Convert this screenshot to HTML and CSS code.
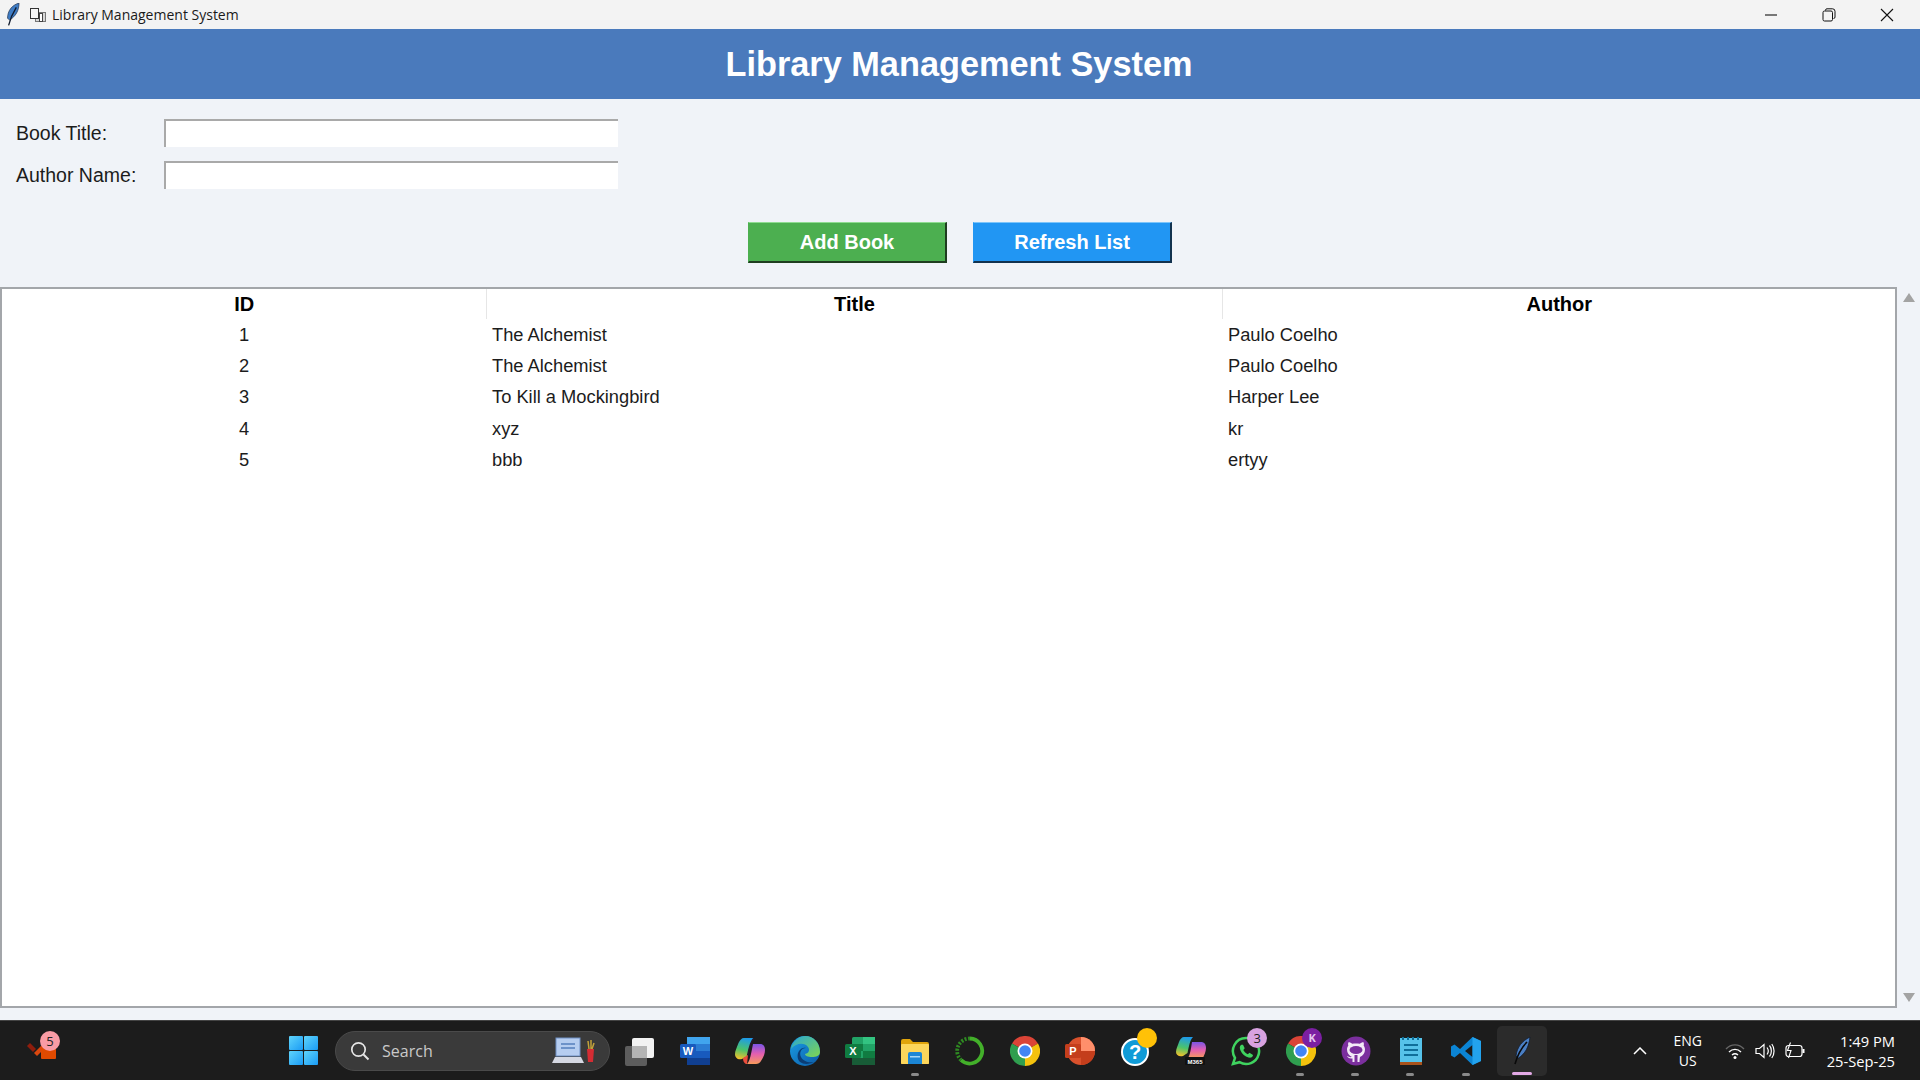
FILE: index.html
```html
<!DOCTYPE html>
<html lang="en">
<head>
    <meta charset="UTF-8">
    <title>Library Management System</title>
    <link rel="stylesheet" href="styles.css">
</head>
<body>
    <div class="window">
        <div class="titlebar">
            <svg class="feather-small" viewBox="0 0 12 21">
                <path d="M11.500 0C5 2 1 7 1 14L3 15.500C8.500 12 11.500 7 11.500 0Z" fill="#3f7cc4" stroke="#1b2c48" stroke-width="0.600"/>
                <path d="M9 4C6.500 8 4 12 2 20.500" fill="none" stroke="#101a2c" stroke-width="1.200"/>
            </svg>
            <svg class="doc-icon" viewBox="0 0 16 16">
                <rect x="5.500" y="5.500" width="10" height="9" fill="#d8d8d8" stroke="#777"/>
                <rect x="0.500" y="1.500" width="8" height="10" fill="#f6f6f6" stroke="#333"/>
                <rect x="9.500" y="6.500" width="3" height="8" fill="#fff" stroke="#444"/>
            </svg>
            <span class="window-title">Library Management System</span>
            <div class="window-buttons">
                <span class="win-btn"><svg viewBox="0 0 14 14"><path d="M1 7H13" stroke="#111" stroke-width="1.100"/></svg></span>
                <span class="win-btn"><svg viewBox="0 0 14 14"><path d="M3.500 2.500V2A1.500 1.500 0 0 1 5 .8H10.500A2.500 2.500 0 0 1 13 3.300V9A1.500 1.500 0 0 1 11.500 10.500" fill="none" stroke="#111"/><rect x="1" y="3" width="9.500" height="10" rx="1.500" fill="none" stroke="#111"/></svg></span>
                <span class="win-btn"><svg viewBox="0 0 14 14"><path d="M1 1L13 13M13 1L1 13" stroke="#111" stroke-width="1.100"/></svg></span>
            </div>
        </div>

        <h1 class="app-header">Library Management System</h1>

        <div class="book-form">
            <div class="form-row">
                <label for="book-title">Book Title:</label>
                <input type="text" id="book-title">
            </div>
            <div class="form-row">
                <label for="author-name">Author Name:</label>
                <input type="text" id="author-name">
            </div>
        </div>

        <div class="form-buttons">
            <button class="btn btn-add">Add Book</button>
            <button class="btn btn-refresh">Refresh List</button>
        </div>

        <div class="table-area">
            <div class="table-box">
                <table class="book-table">
                    <thead>
                        <tr>
                            <th class="col-id">ID</th>
                            <th class="col-title">Title</th>
                            <th class="col-author">Author</th>
                        </tr>
                    </thead>
                    <tbody>
                        <tr><td class="cell-id">1</td><td>The Alchemist</td><td>Paulo Coelho</td></tr>
                        <tr><td class="cell-id">2</td><td>The Alchemist</td><td>Paulo Coelho</td></tr>
                        <tr><td class="cell-id">3</td><td>To Kill a Mockingbird</td><td>Harper Lee</td></tr>
                        <tr><td class="cell-id">4</td><td>xyz</td><td>kr</td></tr>
                        <tr><td class="cell-id">5</td><td>bbb</td><td>ertyy</td></tr>
                    </tbody>
                </table>
            </div>
            <div class="scrollbar">
                <span class="arrow-up"></span>
                <span class="arrow-down"></span>
            </div>
        </div>
    </div>

    <div class="taskbar">
        <div class="task-left">
            <svg class="todo-icon" viewBox="0 0 36 30">
                <path d="M1 10L4 7L10 13L7 16Z" fill="#8f1d0c"/>
                <path d="M8 17L16 9L19 12L11 20Z" fill="#d9480f"/>
                <rect x="15" y="11" width="15" height="12" rx="1" fill="#e04a00"/>
            </svg>
            <span class="badge badge-pink">5</span>
        </div>

        <div class="task-center">
            <span class="slot">
                <svg viewBox="0 0 30 30">
                    <defs>
                        <linearGradient id="winBlue" x1="0" y1="0" x2="1" y2="1">
                            <stop offset="0" stop-color="#5fd4fb"/>
                            <stop offset="1" stop-color="#1a9bf5"/>
                        </linearGradient>
                    </defs>
                    <rect x="0" y="0" width="14" height="14" rx="1" fill="url(#winBlue)"/>
                    <rect x="15" y="0" width="14" height="14" rx="1" fill="url(#winBlue)"/>
                    <rect x="0" y="15" width="14" height="14" rx="1" fill="url(#winBlue)"/>
                    <rect x="15" y="15" width="14" height="14" rx="1" fill="url(#winBlue)"/>
                </svg>
            </span>

            <div class="search-box">
                <svg class="search-glass" viewBox="0 0 20 20"><circle cx="8.500" cy="8.500" r="6.700" fill="none" stroke="#e6e6e6" stroke-width="1.700"/><path d="M13.500 13.500L18.500 18.500" stroke="#e6e6e6" stroke-width="2"/></svg>
                <span class="search-text">Search</span>
                <svg class="search-art" viewBox="0 0 44 28">
                    <rect x="5" y="1" width="24" height="18" fill="#b6cdf0" stroke="#6f8fc4"/>
                    <path d="M10 7H24M10 11H24" stroke="#6d92c9" stroke-width="2"/>
                    <path d="M4 20H30L33 26H1Z" fill="#d5d8e2"/>
                    <path d="M36 12H43L42 25H37Z" fill="#d42c33"/>
                    <path d="M38 12L37 4M40 12V3M41 12L43 6" stroke="#c2a23a" stroke-width="1.500"/>
                </svg>
            </div>

            <span class="slot">
                <svg viewBox="0 0 30 30">
                    <rect x="0" y="10" width="22" height="20" rx="2" fill="#5d5d5d"/>
                    <rect x="7" y="2" width="22" height="20" rx="2" fill="#f2f2f2"/>
                    <rect x="7" y="10" width="15" height="12" fill="#b4b4b4"/>
                </svg>
            </span>

            <span class="slot">
                <svg viewBox="0 0 30 30">
                    <rect x="7" y="1" width="23" height="28" rx="1.500" fill="#2b7cd3"/>
                    <rect x="7" y="1" width="23" height="7" fill="#41a5ee"/>
                    <rect x="7" y="15" width="23" height="7" fill="#185abd"/>
                    <rect x="7" y="22" width="23" height="7" fill="#103f91"/>
                    <rect x="0" y="8" width="16" height="14" rx="1.500" fill="#185abd"/>
                    <text x="8" y="19" class="icon-letter">W</text>
                </svg>
            </span>

            <span class="slot">
                <svg viewBox="0 0 30 30">
                    <defs>
                        <linearGradient id="copA" x1="0.500" y1="0" x2="0.300" y2="1">
                            <stop offset="0" stop-color="#1e9be8"/>
                            <stop offset="0.550" stop-color="#4cc46a"/>
                            <stop offset="1" stop-color="#f5c02a"/>
                        </linearGradient>
                        <linearGradient id="copB" x1="0.500" y1="0" x2="0.500" y2="1">
                            <stop offset="0" stop-color="#7a55e6"/>
                            <stop offset="0.500" stop-color="#e45fb0"/>
                            <stop offset="1" stop-color="#f79a5b"/>
                        </linearGradient>
                    </defs>
                    <path d="M9 2H19C16 5 14 12 12.500 20L7 23C3 24 0 22 0 18C0 15 2 11 3.500 7C5 4 6.500 2 9 2Z" fill="url(#copA)"/>
                    <path d="M18 8H25C28 8 30 10 30 14C30 18 28 22 26 25C25 27 23 28 21 28H12C15 25 16 18 18 8Z" fill="url(#copB)"/>
                    <path d="M19 2C16 5 14 12 12.500 20" fill="none" stroke="#241a2e" stroke-width="1.500"/>
                    <path d="M8 22L13 19L12 28C10 28 8 26 8 22Z" fill="#ea4d3c"/>
                </svg>
            </span>

            <span class="slot">
                <svg viewBox="0 0 30 30">
                    <defs>
                        <linearGradient id="edgeBlue" x1="0" y1="0" x2="1" y2="1">
                            <stop offset="0" stop-color="#1aa0e8"/>
                            <stop offset="1" stop-color="#0c59a4"/>
                        </linearGradient>
                        <linearGradient id="edgeGreen" x1="0" y1="0" x2="1" y2="1">
                            <stop offset="0" stop-color="#28a7d6"/>
                            <stop offset="1" stop-color="#7fd650"/>
                        </linearGradient>
                    </defs>
                    <circle cx="15" cy="15" r="15" fill="url(#edgeBlue)"/>
                    <path d="M1 13C3 4 10 0 15 0C24 0 30 7 30 16C30 20 26 21 22 21C18 21 15 20 15 18C19 17 20 14 18 11C15 7 7 6 1 13Z" fill="url(#edgeGreen)"/>
                    <path d="M16 12C11 12 9 17 11 21C13 25 18 27 24 26C20 28 14 29 10 26C7 23 7 18 9 15C11 12 14 11 16 12Z" fill="#0b3d75"/>
                </svg>
            </span>

            <span class="slot">
                <svg viewBox="0 0 30 30">
                    <rect x="7" y="1" width="23" height="28" rx="1.500" fill="#21a366"/>
                    <rect x="18" y="1" width="12" height="7" fill="#33c481"/>
                    <rect x="7" y="8" width="11" height="7" fill="#107c41"/>
                    <rect x="18" y="15" width="12" height="7" fill="#107c41"/>
                    <rect x="7" y="22" width="23" height="7" fill="#185c37"/>
                    <rect x="0" y="8" width="16" height="14" rx="1.500" fill="#107c41"/>
                    <text x="8" y="19" class="icon-letter">X</text>
                </svg>
            </span>

            <span class="slot has-dot">
                <svg viewBox="0 0 30 30">
                    <path d="M1 5A2 2 0 0 1 3 3H10L13 6H27A2 2 0 0 1 29 8V27A1 1 0 0 1 28 28H2A1 1 0 0 1 1 27Z" fill="#e0a40b"/>
                    <rect x="1" y="8" width="28" height="20" rx="1" fill="#fcd65b"/>
                    <path d="M8 18A2 2 0 0 1 10 16H20A2 2 0 0 1 22 18V28H8Z" fill="#1b86d6"/>
                    <rect x="10" y="20" width="10" height="1.500" fill="#a3d6f7"/>
                </svg>
            </span>

            <span class="slot">
                <svg viewBox="0 0 30 30">
                    <path d="M15 2.500A12.500 12.500 0 1 1 6 24" fill="none" stroke="#43b02a" stroke-width="3.800"/>
                    <path d="M15 2.500A12.500 12.500 0 0 0 6 24" fill="none" stroke="#2f8a22" stroke-width="3.800" stroke-dasharray="2 1.500"/>
                </svg>
            </span>

            <span class="slot">
                <svg viewBox="0 0 30 30">
                    <path d="M15 15L2 7.500A15 15 0 0 1 28 7.500Z" fill="#db4437"/>
                    <path d="M15 15L28 7.500A15 15 0 0 1 15 30Z" fill="#f4c20d"/>
                    <path d="M15 15L15 30A15 15 0 0 1 2 7.500Z" fill="#2f9e4f"/>
                    <circle cx="15" cy="15" r="7.500" fill="#fff"/>
                    <circle cx="15" cy="15" r="5.800" fill="#4285f4"/>
                </svg>
            </span>

            <span class="slot">
                <svg viewBox="0 0 30 30">
                    <circle cx="16" cy="15" r="14" fill="#d9512c"/>
                    <path d="M16 1A14 14 0 0 1 30 15H16Z" fill="#ff8f6b"/>
                    <path d="M16 15H30A14 14 0 0 1 16 29Z" fill="#c43e1c"/>
                    <rect x="0" y="8" width="16" height="14" rx="1.500" fill="#c43e1c"/>
                    <text x="8" y="19" class="icon-letter">P</text>
                </svg>
            </span>

            <span class="slot">
                <svg viewBox="0 0 30 30">
                    <circle cx="15" cy="16" r="13" fill="#0f9bd7" stroke="#fff" stroke-width="2"/>
                    <text x="15" y="23" class="help-mark">?</text>
                </svg>
                <span class="badge badge-yellow"></span>
            </span>

            <span class="slot">
                <svg viewBox="0 0 30 30">
                    <path d="M8 1H17C14 4 13 10 11.500 17L7 20C3 21 0 19 0 16C0 13 2 9 3 6C4 3 6 1 8 1Z" fill="url(#copA)"/>
                    <path d="M16 6H25C28 6 30 8 30 12C30 16 28 19 27 22H12C14 19 15 13 16 6Z" fill="url(#copB)"/>
                    <rect x="9" y="21" width="20" height="8" rx="1" fill="#111"/>
                    <text x="19" y="28" class="m365">M365</text>
                </svg>
            </span>

            <span class="slot">
                <svg viewBox="0 0 30 30">
                    <path d="M15 2A13 13 0 0 0 4 22L2 28L8.500 26.200A13 13 0 1 0 15 2Z" fill="none" stroke="#3fd35f" stroke-width="2.500"/>
                    <path d="M10 9C8.500 10 8.500 12 9.500 14.500C11 18 14 20.500 17.500 21.500C20 22 22 21 22 19L18.500 16.800L16.800 18.300C15 17.500 13.200 15.800 12.300 14L13.700 12.300L12 8.800C11.300 8.500 10.500 8.600 10 9Z" fill="#3fd35f"/>
                </svg>
                <span class="badge badge-lilac">3</span>
            </span>

            <span class="slot has-dot">
                <svg viewBox="0 0 30 30">
                    <path d="M15 15L2 7.500A15 15 0 0 1 28 7.500Z" fill="#db4437"/>
                    <path d="M15 15L28 7.500A15 15 0 0 1 15 30Z" fill="#f4c20d"/>
                    <path d="M15 15L15 30A15 15 0 0 1 2 7.500Z" fill="#2f9e4f"/>
                    <circle cx="15" cy="15" r="7.500" fill="#fff"/>
                    <circle cx="15" cy="15" r="5.800" fill="#4285f4"/>
                </svg>
                <span class="badge badge-purple">K</span>
            </span>

            <span class="slot has-dot">
                <svg viewBox="0 0 30 30">
                    <circle cx="15" cy="15" r="14.500" fill="#7b2f9e"/>
                    <path d="M11.500 26V22.500C8 23 7 21.500 6 20C7.500 20.500 8.500 21.500 11 21C8 19.500 6 17 6 13.500C6 12 6.500 10.800 7.300 9.800C7 8.600 7 7.300 7.500 6.300C9 6.300 10.300 7 11.300 7.800C13.500 7.300 16.500 7.300 18.700 7.800C19.700 7 21 6.300 22.500 6.300C23 7.300 23 8.600 22.700 9.800C23.500 10.800 24 12 24 13.500C24 17 22 19.500 19 21C18.800 22 18.500 24 18.500 26H16.500V19H13.500V26Z" fill="#f3eaf7"/>
                    <ellipse cx="15" cy="14" rx="6.500" ry="4" fill="#7b2f9e"/>
                </svg>
            </span>

            <span class="slot has-dot">
                <svg viewBox="0 0 30 30">
                    <rect x="4" y="2" width="22" height="27" fill="#56c3ea"/>
                    <rect x="4" y="26" width="22" height="3" fill="#a9531c"/>
                    <path d="M8 9H22M8 14H22M8 19H22" stroke="#0f6f9a" stroke-width="2"/>
                    <path d="M7 1V4M12 1V4M17 1V4M22 1V4" stroke="#0f6f9a" stroke-width="2"/>
                </svg>
            </span>

            <span class="slot has-dot">
                <svg viewBox="0 0 30 30">
                    <path d="M21.500 1L30 5V25L21.500 29L9 17L3.500 21.500L0 19.500V10.500L3.500 8.500L9 13ZM21.500 9L14 15L21.500 21Z" fill="#0b84d4"/>
                    <path d="M21.500 1L30 5V25L21.500 29Z" fill="#23a3ee"/>
                </svg>
            </span>

            <span class="slot slot-active">
                <svg viewBox="0 0 30 30">
                    <path d="M23 1C15 5 10 11 9 20L11.500 22C18 18 22 11 23 1Z" fill="#4a7fc4" stroke="#101a2c" stroke-width="0.800"/>
                    <path d="M20 6C15 11 11 17 8 28" fill="none" stroke="#0a0a0a" stroke-width="1.600"/>
                </svg>
            </span>
        </div>

        <div class="tray">
            <svg class="tray-caret" viewBox="0 0 14 8"><path d="M1 7L7 1L13 7" fill="none" stroke="#fff" stroke-width="1.500"/></svg>
            <div class="lang">ENG<br>US</div>
            <svg class="tray-icon" viewBox="0 0 20 20"><path d="M1 8C6 2.500 14 2.500 19 8" fill="none" stroke="#666" stroke-width="1.400"/><path d="M4 11C7.500 7.500 12.500 7.500 16 11M7 14C9 12.300 11 12.300 13 14" fill="none" stroke="#fff" stroke-width="1.400"/><circle cx="10" cy="16.500" r="1.500" fill="#fff"/></svg>
            <svg class="tray-icon" viewBox="0 0 20 20"><path d="M1 7.500H4.500L9 3.500V16.500L4.500 12.500H1Z" fill="none" stroke="#fff" stroke-width="1.200"/><path d="M12 6.500C13.500 8.500 13.500 11.500 12 13.500M14.500 4.500C17 7.500 17 12.500 14.500 15.500M16.800 3C19.800 7 19.800 13 16.800 17" fill="none" stroke="#fff" stroke-width="1.200"/></svg>
            <svg class="tray-icon" viewBox="0 0 20 20"><rect x="1" y="4.500" width="16" height="11" rx="2.500" fill="none" stroke="#fff" stroke-width="1.200"/><rect x="17.500" y="8" width="2" height="4" fill="#fff"/><path d="M5.500 1.500L2.500 9.500H6L3.500 17" fill="#1c1c1c" stroke="#fff" stroke-width="1.100"/></svg>
            <div class="clock">
                <div>1:49 PM</div>
                <div>25-Sep-25</div>
            </div>
        </div>
    </div>
</body>
</html>
```

FILE: styles.css
```css
* {
    margin: 0;
    padding: 0;
    box-sizing: border-box;
}

body {
    width: 1920px;
    height: 1080px;
    overflow: hidden;
    font-family: "Liberation Sans", Arial, sans-serif;
    background-color: #f0f3f8;
    display: flex;
    flex-direction: column;
}

.window {
    height: 1020px;
    display: flex;
    flex-direction: column;
}

/* title bar */
.titlebar {
    height: 29px;
    background-color: #f3f3f3;
    display: flex;
    align-items: center;
    padding: 0 4px 0 6px;
}

.feather-small {
    width: 14px;
    height: 23px;
}

.doc-icon {
    width: 16px;
    height: 16px;
    margin-left: 10px;
}

.window-title {
    margin-left: 6px;
    font-family: "Open Sans", sans-serif;
    font-size: 14px;
    color: #1a1a1a;
}

.window-buttons {
    margin-left: auto;
    display: flex;
}

.win-btn {
    width: 58px;
    height: 29px;
    display: flex;
    align-items: center;
    justify-content: center;
}

.win-btn svg {
    width: 14px;
    height: 14px;
}

/* header */
.app-header {
    height: 70px;
    background-color: #4a7abc;
    color: white;
    font-size: 34.300px;
    line-height: 70px;
    text-align: center;
    padding-right: 2px;
}

/* form */
.book-form {
    padding: 20px 0 0 16px;
    display: flex;
    flex-direction: column;
    gap: 14px;
}

.form-row {
    display: flex;
    align-items: center;
    height: 28px;
}

.form-row label {
    width: 148px;
    font-size: 19.500px;
    color: #1c1c1c;
}

.form-row input {
    width: 454px;
    height: 28px;
    background-color: white;
    border: none;
    border-top: 2px solid #a9a9a9;
    border-left: 2px solid #a9a9a9;
}

.form-buttons {
    display: flex;
    justify-content: center;
    gap: 26px;
    padding-top: 33px;
}

.btn {
    width: 199px;
    height: 41px;
    color: white;
    font-family: "Liberation Sans", Arial, sans-serif;
    font-size: 20px;
    font-weight: bold;
    border-style: solid;
    border-width: 1px 2px 2px 1px;
}

.btn-add {
    background-color: #4caf50;
    border-color: #8fdc92 #1f3d20 #1f3d20 #4caf50;
}

.btn-refresh {
    background-color: #2196f3;
    border-color: #7cc5fb #12324f #12324f #2196f3;
}

/* table */
.table-area {
    flex: 1;
    display: flex;
    margin-top: 24px;
    padding-bottom: 12px;
}

.table-box {
    width: 1897px;
    background-color: white;
    border: 2px solid #a3a6aa;
}

.book-table {
    width: 100%;
    border-collapse: collapse;
    table-layout: fixed;
    font-size: 18.300px;
    color: #1c1c1c;
}

.book-table th {
    height: 30px;
    padding-left: 1px;
    font-size: 20px;
    color: #000;
    border-right: 1px solid #e6e6e6;
}

.book-table th:last-child {
    border-right: none;
}

.col-id {
    width: 484px;
}

.col-title {
    width: 736px;
}

.book-table td {
    height: 31.300px;
    padding-left: 6px;
}

.book-table td.cell-id {
    text-align: center;
    padding-left: 0;
}

.scrollbar {
    flex: 1;
    display: flex;
    flex-direction: column;
    justify-content: space-between;
    align-items: center;
    padding: 6px 0;
}

.arrow-up {
    border-left: 6px solid transparent;
    border-right: 6px solid transparent;
    border-bottom: 9px solid #a3a3a3;
}

.arrow-down {
    border-left: 6px solid transparent;
    border-right: 6px solid transparent;
    border-top: 9px solid #a3a3a3;
}

/* taskbar */
.taskbar {
    height: 60px;
    background-color: #1c1c1c;
    border-top: 1px solid #444;
    display: flex;
    align-items: center;
    position: relative;
}

.task-left {
    width: 276px;
    padding-left: 26px;
    position: relative;
}

.todo-icon {
    width: 36px;
    height: 30px;
    display: block;
}

.task-center {
    display: flex;
    align-items: center;
}

.slot {
    width: 55.100px;
    height: 50px;
    display: flex;
    align-items: center;
    justify-content: center;
    position: relative;
}

.slot svg {
    width: 30px;
    height: 30px;
}

.has-dot::after {
    content: "";
    position: absolute;
    left: 23px;
    bottom: 0;
    width: 8px;
    height: 3px;
    border-radius: 2px;
    background-color: #8a8a8a;
}

.slot-active {
    background-color: #2b2b2b;
    border-radius: 5px;
    width: 50px;
    margin-left: 3px;
}

.slot-active::after {
    content: "";
    position: absolute;
    left: 15px;
    bottom: 1px;
    width: 20px;
    height: 3px;
    border-radius: 2px;
    background-color: #e3a9e6;
}

.badge {
    position: absolute;
    width: 20px;
    height: 20px;
    border-radius: 50%;
    font-family: "Open Sans", sans-serif;
    font-size: 13px;
    line-height: 20px;
    text-align: center;
    color: #222;
}

.task-left .badge {
    left: 40px;
    top: -5px;
}

.slot .badge {
    left: 29px;
    top: 2px;
}

.badge-pink {
    background-color: #f99ca5;
}

.badge-yellow {
    background-color: #ffc107;
}

.badge-lilac {
    background-color: #d8a2e0;
}

.badge-purple {
    background-color: #7b1fa2;
    color: #e3c5ee;
    font-size: 11px;
    font-weight: bold;
}

.search-box {
    width: 275px;
    height: 40px;
    margin: 0 2px 0 4px;
    background-color: #3a3a3a;
    border: 1px solid #4a4a4a;
    border-radius: 20px;
    display: flex;
    align-items: center;
    padding-left: 14px;
}

.search-glass {
    width: 20px;
    height: 20px;
}

.search-text {
    margin-left: 12px;
    font-family: "Open Sans", sans-serif;
    font-size: 16px;
    color: #c9c9c9;
}

.search-art {
    margin-left: auto;
    margin-right: 14px;
    width: 44px;
    height: 28px;
}

.icon-letter {
    font-family: "Liberation Sans", Arial, sans-serif;
    font-size: 11px;
    font-weight: bold;
    fill: white;
    text-anchor: middle;
}

.help-mark {
    font-family: "Liberation Sans", Arial, sans-serif;
    font-size: 20px;
    font-weight: bold;
    fill: white;
    text-anchor: middle;
}

.m365 {
    font-family: "Liberation Sans", Arial, sans-serif;
    font-size: 6px;
    font-weight: bold;
    fill: white;
    text-anchor: middle;
}

.tray {
    position: absolute;
    right: 25px;
    top: 0;
    bottom: 0;
    display: flex;
    align-items: center;
    color: white;
    font-family: "Open Sans", sans-serif;
}

.tray-caret {
    width: 14px;
    height: 8px;
    margin-right: 21px;
}

.lang {
    width: 40px;
    font-size: 14px;
    line-height: 20px;
    text-align: center;
    margin-right: 17px;
}

.tray-icon {
    width: 20px;
    height: 20px;
    margin-right: 10px;
}

.clock {
    margin-left: 12px;
    font-size: 14.700px;
    line-height: 20px;
    text-align: right;
}
```
